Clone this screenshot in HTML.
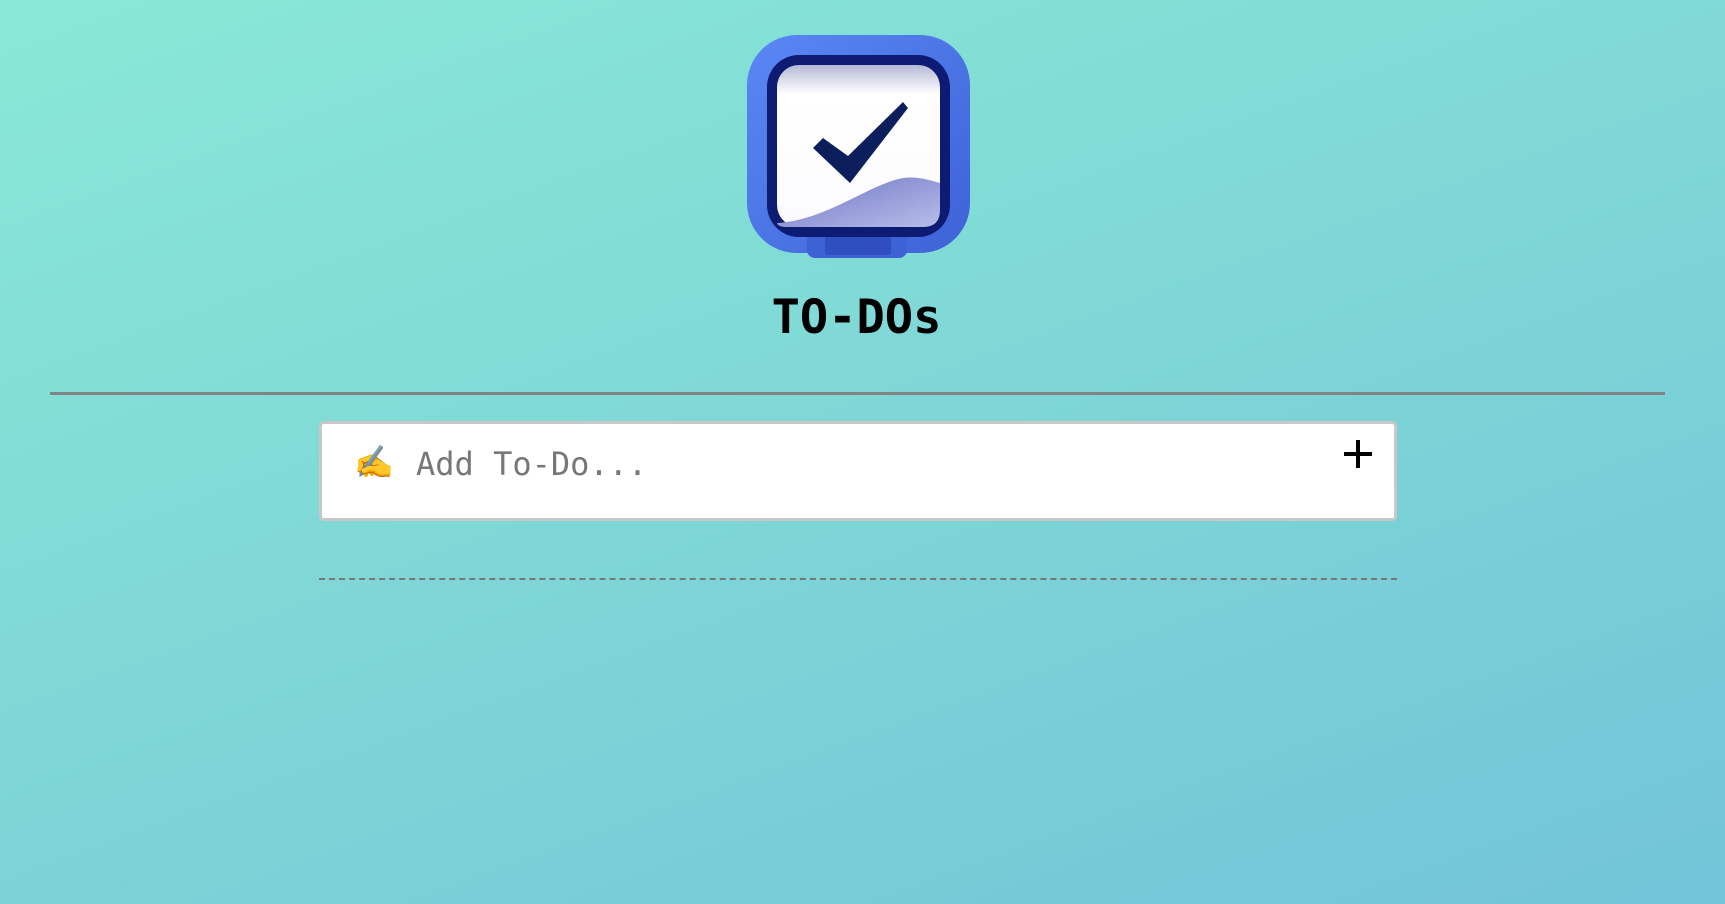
<!DOCTYPE html>
<html><head><meta charset="utf-8"><style>
html,body{margin:0;padding:0;}
body{width:1725px;height:904px;overflow:hidden;position:relative;background:linear-gradient(160deg,#89e8d7 0%,#7fd8d6 45%,#72c4d8 100%);font-family:"DejaVu Sans Mono","Liberation Mono",monospace;}
.icon{position:absolute;left:747px;top:35px;width:223px;height:223px;}
h1{position:absolute;left:-6px;width:1725px;top:290px;margin:0;text-align:center;font:bold 47px/56px "DejaVu Sans Mono","Liberation Mono",monospace;color:#000;}
.hr{position:absolute;left:50px;width:1615px;top:392px;height:3px;background:#7f8585;}
.box{position:absolute;left:319px;top:421px;width:1072px;height:94px;background:#fff;border:3px solid #c8c8c8;border-radius:5px;}
.ph{position:absolute;left:94px;top:20px;font-size:32px;color:#777;line-height:40px;}
.emo{position:absolute;left:32px;top:18px;font-size:32px;line-height:40px;font-family:"Noto Color Emoji","DejaVu Sans",sans-serif;}
.plus{position:absolute;left:1022px;top:16px;width:28px;height:28px;}
.dash{position:absolute;left:319px;width:1078px;top:578px;border-top:2px dashed #777;}
</style></head><body>
<svg class="icon" viewBox="0 0 223 223">
<defs>
<linearGradient id="bl" x1="0" y1="0" x2="1" y2="1"><stop offset="0" stop-color="#5a88f5"/><stop offset="1" stop-color="#3d62d6"/></linearGradient>
<linearGradient id="pp" x1="0" y1="0" x2="0" y2="1"><stop offset="0" stop-color="#b6b9d6"/><stop offset="0.18" stop-color="#ffffff"/><stop offset="1" stop-color="#fbfbfe"/></linearGradient>
<linearGradient id="cu" x1="0" y1="0" x2="1" y2="1"><stop offset="0" stop-color="#6f76c6"/><stop offset="1" stop-color="#b7bde8"/></linearGradient>
</defs>
<rect x="0" y="0" width="223" height="218" rx="50" fill="url(#bl)"/>
<rect x="60" y="196" width="100" height="27" rx="8" fill="#3d62d6"/>
<rect x="78" y="200" width="66" height="20" rx="3" fill="#2f4fc0"/>
<rect x="20" y="20" width="183" height="182" rx="32" fill="#0e1b72"/>
<rect x="30" y="30" width="163" height="162" rx="22" fill="url(#pp)"/>
<path d="M30 188 C80 185 120 150 156 143 C172 141 185 146 193 148 L193 175 Q193 192 176 192 L40 192 Q31 192 30 188Z" fill="url(#cu)"/>
<path d="M66 113 L76 103 L101 121 L156 67 L161 73 L103 148 Z" fill="#0c1f5c"/>
</svg>
<h1>TO-DOs</h1>
<div class="hr"></div>
<div class="box">
<span class="emo">✍️</span>
<span class="ph">Add To-Do...</span>
<svg class="plus" viewBox="0 0 28 28"><path d="M14 1V27M1 14H27" stroke="#000" stroke-width="4" stroke-linecap="round"/></svg>
</div>
<div class="dash"></div>
</body></html>
